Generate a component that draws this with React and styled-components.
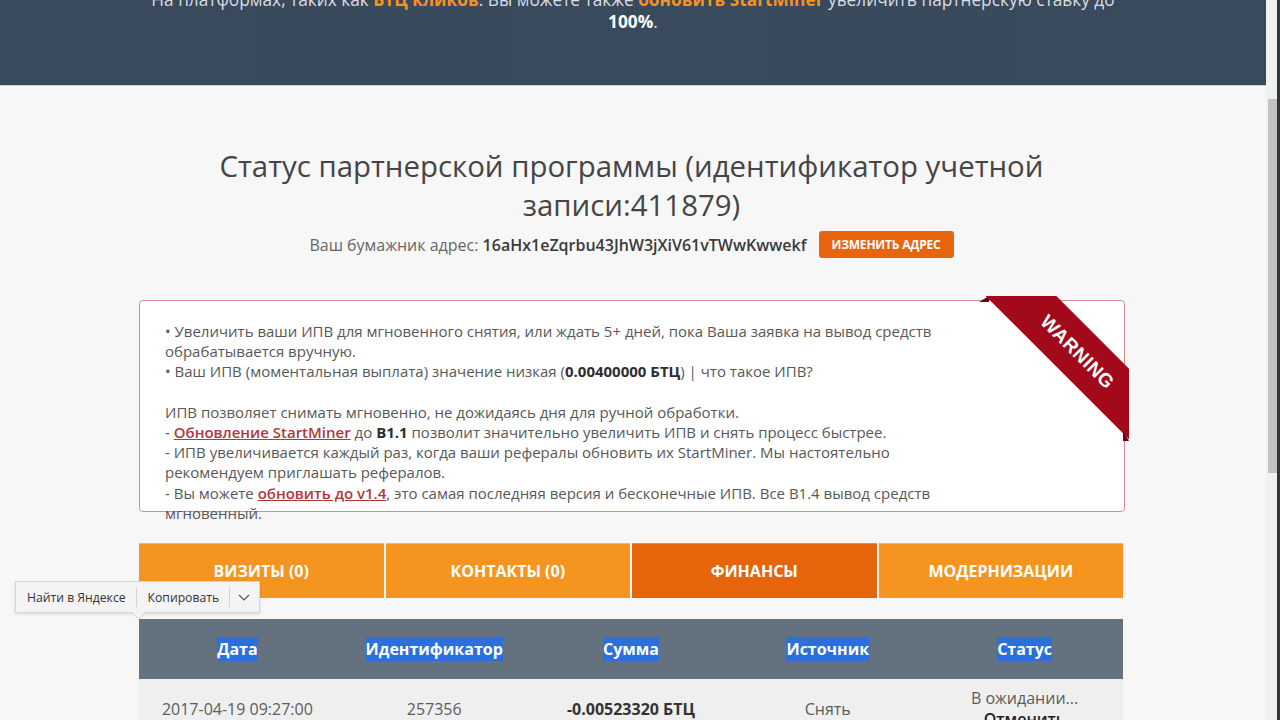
import styled, { createGlobalStyle } from "styled-components";

const GlobalStyle = createGlobalStyle`
  html, body {
    margin: 0;
    padding: 0;
    overflow: hidden;
  }
  body {
    font-family: "Open Sans", "Liberation Sans", sans-serif;
    background: #f7f7f7;
  }
`;

const Shell = styled.div`
  display: flex;
  width: 1280px;
  height: 720px;
  overflow: hidden;
`;

const Main = styled.div`
  width: 1266px;
  height: 720px;
  overflow: hidden;
  background: #f7f7f7;
  position: relative;
`;

const ScrollTrack = styled.div`
  width: 14px;
  height: 720px;
  display: flex;
  background: #f1f1f1;
  border-right: 3px solid #2f3a32;
  box-sizing: border-box;
`;

const ScrollThumb = styled.div`
  width: 9px;
  height: 374px;
  margin: 99px 0 0 2px;
  background: #c3c3c3;
`;

const Banner = styled.div`
  height: 86px;
  overflow: hidden;
  background-color: #3a4b5e;
  background-image:
    repeating-linear-gradient(0deg, rgba(0, 0, 0, 0.035) 0 1px, transparent 1px 4px),
    repeating-linear-gradient(90deg, rgba(0, 0, 0, 0.035) 0 1px, transparent 1px 4px);
  border-bottom: 1px solid #cfd3d7;
  box-sizing: border-box;
`;

const BannerText = styled.p`
  margin: -11px 0 0;
  text-align: center;
  font-size: 17.3px;
  line-height: 22px;
  color: #d8dde3;
`;

const BannerLink = styled.span`
  color: #f39325;
  font-weight: 700;
`;

const BannerStrong = styled.strong`
  color: #ffffff;
  font-weight: 700;
`;

const Content = styled.div`
  width: 985px;
  margin-left: 139px;
`;

const Title = styled.h2`
  margin: 61px 0 0;
  text-align: center;
  font-size: 29.4px;
  line-height: 39px;
  font-weight: 400;
  color: #454545;
`;

const WalletRow = styled.div`
  display: flex;
  justify-content: center;
  align-items: center;
  gap: 12px;
  margin-top: 6px;
  font-size: 16px;
  color: #666;
`;

const Address = styled.span`
  color: #3a3a3a;
  font-weight: 600;
`;

const OrangeButton = styled.button`
  height: 27px;
  padding: 0 13px;
  border: none;
  border-radius: 3px;
  background: #e8650f;
  color: #fff;
  font-family: "Open Sans", sans-serif;
  font-size: 12px;
  font-weight: 700;
  letter-spacing: -0.2px;
`;

const WarningBox = styled.div`
  position: relative;
  margin-top: 42px;
  width: 986px;
  height: 212px;
  box-sizing: border-box;
  padding: 20px 25px 0;
  background: #fff;
  border: 1px solid #d98a90;
  border-radius: 4px;
  font-size: 15px;
  line-height: 20.2px;
  color: #585858;
`;

const Para = styled.p`
  margin: 0;
  white-space: nowrap;
  & + & {
    margin-top: 20.2px;
  }
`;

const Strong = styled.strong`
  color: #2e2e2e;
  font-weight: 700;
`;

const RedLink = styled.a`
  color: #b3353d;
  font-weight: 600;
  text-decoration: underline;
`;

const RibbonClip = styled.div`
  position: absolute;
  top: -5px;
  right: -5px;
  width: 150px;
  height: 150px;
  overflow: hidden;

  &::before,
  &::after {
    content: "";
    position: absolute;
    border-style: solid;
    border-color: transparent;
  }
  &::before {
    top: 0;
    left: 0;
    border-width: 0 0 6px 10px;
    border-bottom-color: #6c0612;
  }
  &::after {
    right: 0;
    bottom: 5px;
    border-width: 10px 0 0 6px;
    border-left-color: #6c0612;
  }
`;

const RibbonBand = styled.div`
  position: absolute;
  left: -14px;
  top: 29px;
  width: 220px;
  height: 50px;
  transform: rotate(45deg);
  background: #a20a1b;
  color: #fff;
  font-family: "Liberation Sans", Arial, sans-serif;
  font-weight: 700;
  font-size: 19px;
  letter-spacing: 0.5px;
  display: flex;
  align-items: center;
  justify-content: center;
  padding-left: 6px;
  box-sizing: border-box;
`;

const Tabs = styled.div`
  display: grid;
  grid-template-columns: repeat(4, 1fr);
  gap: 2px;
  margin-top: 31px;
  width: 984px;
`;

const Tab = styled.div`
  height: 55px;
  display: flex;
  align-items: center;
  justify-content: center;
  background: ${(p) => (p.$active ? "#e6650b" : "#f5951f")};
  border-top: 1px solid ${(p) => (p.$active ? "#ef8a43" : "#f8b765")};
  box-sizing: border-box;
  color: #fff;
  font-size: 16px;
  font-weight: 700;
`;

const Table = styled.div`
  margin-top: 21px;
  width: 984px;
`;

const HeadRow = styled.div`
  display: grid;
  grid-template-columns: repeat(5, 1fr);
  height: 60px;
  align-items: center;
  background: #647280;
`;

const HeadCell = styled.div`
  text-align: center;
  font-size: 16px;
  font-weight: 700;
  color: #fff;
`;

const Picked = styled.span`
  background: #2c6fdc;
  padding: 1px 0;
  line-height: 22px;
`;

const BodyRow = styled.div`
  display: grid;
  grid-template-columns: repeat(5, 1fr);
  height: 60px;
  align-items: center;
  background: #efefef;
`;

const Cell = styled.div`
  text-align: center;
  font-size: 16px;
  line-height: 21px;
  color: ${(p) => (p.$bold ? "#333" : "#5c5c5c")};
  font-weight: ${(p) => (p.$bold ? 700 : 400)};
`;

const CancelLink = styled.div`
  color: #222;
  font-weight: 600;
`;

const Popup = styled.div`
  position: absolute;
  left: 15px;
  top: 581px;
  height: 30px;
  display: flex;
  align-items: center;
  background: #f4f4f4;
  border: 1px solid #d6d6d6;
  box-shadow: 0 1px 3px rgba(0, 0, 0, 0.12);
  font-size: 12.2px;
  color: #333;

  &::after {
    content: "";
    position: absolute;
    left: 118px;
    bottom: -6px;
    width: 8px;
    height: 8px;
    background: #f4f4f4;
    border-right: 1px solid #d6d6d6;
    border-bottom: 1px solid #d6d6d6;
    transform: rotate(45deg);
  }
`;

const PopupItem = styled.div`
  padding: 0 10px 0 11px;
  height: 20px;
  display: flex;
  align-items: center;
  & + & {
    border-left: 1px solid #d4d4d4;
  }
  &:last-child {
    padding: 0 8px 0 7px;
  }
`;

export default function App() {
  return (
    <>
      <GlobalStyle />
      <Shell>
        <Main>
          <Banner>
            <BannerText>
              На платформах, таких как <BannerLink>БТЦ кликов</BannerLink>. Вы можете также{" "}
              <BannerLink>обновить StartMiner</BannerLink> увеличить партнерскую ставку до
              <br />
              <BannerStrong>100%</BannerStrong>.
            </BannerText>
          </Banner>

          <Content>
            <Title>
              Статус партнерской программы (идентификатор учетной
              <br />
              записи:411879)
            </Title>
            <WalletRow>
              <span>
                Ваш бумажник адрес: <Address>16aHx1eZqrbu43JhW3jXiV61vTWwKwwekf</Address>
              </span>
              <OrangeButton>ИЗМЕНИТЬ АДРЕС</OrangeButton>
            </WalletRow>

            <WarningBox>
              <Para>
                • Увеличить ваши ИПВ для мгновенного снятия, или ждать 5+ дней, пока Ваша заявка на вывод средств
                <br />
                обрабатывается вручную.
                <br />
                • Ваш ИПВ (моментальная выплата) значение низкая (<Strong>0.00400000 БТЦ</Strong>) | что такое ИПВ?
              </Para>
              <Para>
                ИПВ позволяет снимать мгновенно, не дожидаясь дня для ручной обработки.
                <br />
                - <RedLink>Обновление StartMiner</RedLink> до <Strong>B1.1</Strong> позволит значительно увеличить ИПВ и
                снять процесс быстрее.
                <br />
                - ИПВ увеличивается каждый раз, когда ваши рефералы обновить их StartMiner. Мы настоятельно
                <br />
                рекомендуем приглашать рефералов.
                <br />
                - Вы можете <RedLink>обновить до v1.4</RedLink>, это самая последняя версия и бесконечные ИПВ. Все B1.4
                вывод средств
                <br />
                мгновенный.
              </Para>
              <RibbonClip>
                <RibbonBand>WARNING</RibbonBand>
              </RibbonClip>
            </WarningBox>

            <Tabs>
              <Tab>ВИЗИТЫ (0)</Tab>
              <Tab>КОНТАКТЫ (0)</Tab>
              <Tab $active>ФИНАНСЫ</Tab>
              <Tab>МОДЕРНИЗАЦИИ</Tab>
            </Tabs>

            <Table>
              <HeadRow>
                {["Дата", "Идентификатор", "Сумма", "Источник", "Статус"].map((h) => (
                  <HeadCell key={h}>
                    <Picked>{h}</Picked>
                  </HeadCell>
                ))}
              </HeadRow>
              <BodyRow>
                <Cell>2017-04-19 09:27:00</Cell>
                <Cell>257356</Cell>
                <Cell $bold>-0.00523320 БТЦ</Cell>
                <Cell>Снять</Cell>
                <Cell>
                  В ожидании...
                  <CancelLink>Отменить</CancelLink>
                </Cell>
              </BodyRow>
            </Table>
          </Content>

          <Popup>
            <PopupItem>Найти в Яндексе</PopupItem>
            <PopupItem>Копировать</PopupItem>
            <PopupItem>
              <svg width="14" height="14" viewBox="0 0 14 14" fill="none">
                <path d="M2 5l5 5 5-5" stroke="#555" strokeWidth="1.2" />
              </svg>
            </PopupItem>
          </Popup>
        </Main>
        <ScrollTrack>
          <ScrollThumb />
        </ScrollTrack>
      </Shell>
    </>
  );
}
